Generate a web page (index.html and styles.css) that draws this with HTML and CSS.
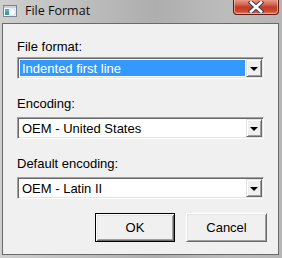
FILE: index.html
```html
<!DOCTYPE html>
<html>
<head>
<meta charset="utf-8">
<link rel="stylesheet" href="styles.css">
</head>
<body>
<div class="window">
  <div class="titlebar">
    <svg class="app-icon" width="14" height="12" viewBox="0 0 14 12">
      <rect x="0.5" y="0.5" width="13" height="11" fill="#f4f6f8" stroke="#7a8592"/>
      <rect x="1" y="1" width="12" height="2" fill="#c9d3de"/>
      <rect x="2" y="4" width="4" height="6" fill="#3f9a8a"/>
      <rect x="2" y="4" width="4" height="3" fill="#5aa8d6"/>
      <rect x="7" y="4" width="5" height="6" fill="#ffffff" stroke="#b8c2cc" stroke-width="0.5"/>
    </svg>
    <span class="title">File Format</span>
    <div class="close">
      <svg width="18" height="12" viewBox="0 0 18 12">
        <path d="M4 1.5 L14 10.5 M14 1.5 L4 10.5" stroke="#3a3f55" stroke-width="4.6" stroke-linecap="square"/>
        <path d="M4 1.5 L14 10.5 M14 1.5 L4 10.5" stroke="#ffffff" stroke-width="2.6" stroke-linecap="square"/>
      </svg>
    </div>
  </div>
  <div class="client">
    <div class="field first">
      <label class="label">File format:</label>
      <div class="combo">
        <div class="combo-value selected">Indented first line</div>
        <div class="combo-btn"><span class="arrow"></span></div>
      </div>
    </div>
    <div class="field">
      <label class="label">Encoding:</label>
      <div class="combo">
        <div class="combo-value">OEM - United States</div>
        <div class="combo-btn"><span class="arrow"></span></div>
      </div>
    </div>
    <div class="field">
      <label class="label">Default encoding:</label>
      <div class="combo">
        <div class="combo-value">OEM - Latin II</div>
        <div class="combo-btn"><span class="arrow"></span></div>
      </div>
    </div>
    <div class="buttons">
      <button class="btn default">OK</button>
      <button class="btn">Cancel</button>
    </div>
  </div>
</div>
</body>
</html>
```

FILE: styles.css
```css
* { box-sizing: border-box; }
html, body { margin: 0; padding: 0; }
body {
  width: 282px;
  height: 258px;
  overflow: hidden;
  background: #c4c4c4;
  font-family: "Liberation Sans", Arial, sans-serif;
}
.window {
  width: 282px;
  height: 258px;
  display: flex;
  flex-direction: column;
  padding: 0 3px 3px 2px;
  background: linear-gradient(90deg, #cfcfcf 0%, #bdbdbd 30%, #aeaeae 55%, #bcbcbc 80%, #b6b6b6 100%);
}
.titlebar {
  height: 23px;
  display: flex;
  align-items: flex-start;
  position: relative;
  margin: 0 -3px 0 -2px;
  padding-left: 3px;
}
.app-icon {
  margin-top: 5px;
  flex: none;
}
.title {
  margin-left: 8px;
  margin-top: 2px;
  font-family: "Open Sans", "Noto Sans", sans-serif;
  font-size: 12.5px;
  color: #101010;
  line-height: 17px;
}
.close {
  margin-left: auto;
  margin-right: 3px;
  width: 46px;
  height: 16px;
  margin-top: -1px;
  border: 1px solid #5a1e16;
  border-top: none;
  border-radius: 0 0 4px 4px;
  background: linear-gradient(180deg, #e9a595 0%, #d66a55 35%, #c33a22 55%, #c94a30 80%, #dd7a60 100%);
  box-shadow: inset 0 0 0 1px rgba(255, 210, 200, 0.55);
  display: flex;
  align-items: center;
  justify-content: center;
  padding-top: 1px;
}
.client {
  flex: 1;
  background: #f0f0f0;
  border: 1px solid #6a6a6a;
  padding: 15px 11px 0 14px;
  display: flex;
  flex-direction: column;
}
.field {
  display: flex;
  flex-direction: column;
  margin-top: 17px;
}
.field.first { margin-top: 0; }
.label {
  font-size: 13px;
  line-height: 15px;
  color: #000;
  margin-bottom: 6px;
}
.field.first .label { margin-bottom: 3px; }
.combo {
  width: 247px;
  height: 22px;
  display: flex;
  background: #fff;
  border: 1px solid;
  border-color: #a0a0a0 #ffffff #ffffff #a0a0a0;
  box-shadow: inset 1px 1px 0 #696969, inset -1px -1px 0 #e3e3e3;
  padding: 2px 2px 2px 2px;
}
.combo-value {
  flex: 1;
  font-size: 13px;
  line-height: 16px;
  padding: 1px 2px;
  color: #000;
  white-space: nowrap;
  margin-right: 1px;
}
.combo-value.selected {
  background: #3399ff;
  color: #fff;
}
.combo-btn {
  width: 16px;
  margin: -1px -1px -1px 0;
  background: #f0f0f0;
  border: 1px solid;
  border-color: #e3e3e3 #696969 #696969 #e3e3e3;
  box-shadow: inset 1px 1px 0 #ffffff, inset -1px -1px 0 #a0a0a0;
  display: flex;
  align-items: center;
  justify-content: center;
}
.arrow {
  width: 0;
  height: 0;
  border-left: 4px solid transparent;
  border-right: 4px solid transparent;
  border-top: 4px solid #000;
  margin-top: 1px;
}
.buttons {
  display: flex;
  justify-content: flex-end;
  gap: 11px;
  margin-top: 14px;
}
.btn {
  width: 81px;
  height: 29px;
  font-family: "Liberation Sans", Arial, sans-serif;
  font-size: 13px;
  color: #000;
  background: #f0f0f0;
  border: 1px solid;
  border-color: #ffffff #696969 #696969 #ffffff;
  box-shadow: inset 1px 1px 0 #e3e3e3, inset -1px -1px 0 #a0a0a0;
  padding: 0;
}
.btn.default {
  border: 1px solid #000;
  box-shadow: inset 1px 1px 0 #ffffff, inset -1px -1px 0 #696969, inset 2px 2px 0 #e3e3e3, inset -2px -2px 0 #a0a0a0;
  width: 80px;
}
```
